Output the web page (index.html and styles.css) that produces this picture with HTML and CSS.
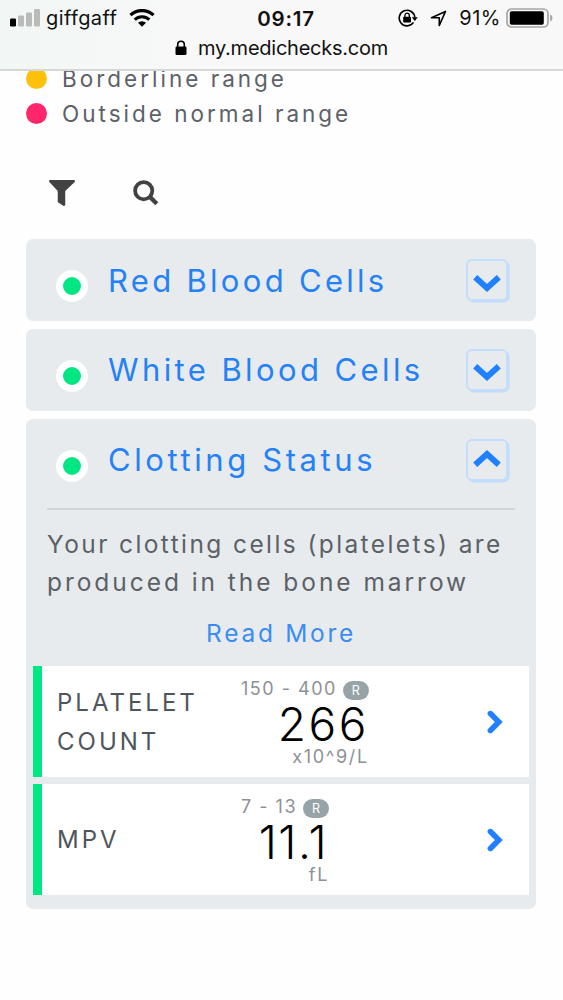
FILE: index.html
```html
<!DOCTYPE html>
<html lang="en">
<head>
  <meta charset="UTF-8">
  <meta name="viewport" content="width=device-width, initial-scale=1.0">
  <title>Medichecks</title>
  <link rel="stylesheet" href="styles.css">
</head>
<body>
  <header class="browser">
    <div class="status">
      <div class="status-left">
        <svg class="signal" width="30" height="18" viewBox="0 0 30 18">
          <rect x="0" y="9.5" width="6" height="8" rx="1.3" fill="#000"/>
          <rect x="8" y="6.5" width="6" height="11" rx="1.3" fill="#b9bbba"/>
          <rect x="16" y="3.5" width="6" height="14" rx="1.3" fill="#b9bbba"/>
          <rect x="24" y="0" width="6" height="17.5" rx="1.3" fill="#b9bbba"/>
        </svg>
        <span class="carrier">giffgaff</span>
        <svg class="wifi" width="26" height="18" viewBox="0 0 26 18">
          <path d="M1.5 6.2A16.5 16.5 0 0 1 24.5 6.2" fill="none" stroke="#000" stroke-width="3.2"/>
          <path d="M5.7 10.6A10.5 10.5 0 0 1 20.3 10.6" fill="none" stroke="#000" stroke-width="3"/>
          <path d="M9 13.8a5.8 5.8 0 0 1 8 0L13 17.7z" fill="#000"/>
        </svg>
      </div>
      <span class="time">09:17</span>
      <div class="status-right">
        <svg class="rotation" width="20" height="18" viewBox="0 0 20 18">
          <path d="M15.5 13.4A7.8 7.8 0 1 1 16.8 8.5" fill="none" stroke="#000" stroke-width="1.6"/>
          <path d="M13.8 8.2h6l-3 3.7z" fill="#000"/>
          <rect x="5.2" y="7.8" width="7.8" height="5.8" rx=".8" fill="#000"/>
          <path d="M6.9 8.3V6.4a2.2 2.2 0 0 1 4.4 0v1.9" fill="none" stroke="#000" stroke-width="1.3"/>
        </svg>
        <svg class="location" width="17" height="17" viewBox="0 0 17 17">
          <path d="M1.5 7.7L15.5 1.4L9.3 15.5V7.7z" fill="none" stroke="#000" stroke-width="1.6" stroke-linejoin="round"/>
        </svg>
        <span class="percent">91%</span>
        <svg class="battery" width="47" height="20" viewBox="0 0 47 20">
          <rect x="1" y="1" width="41" height="18" rx="4.5" fill="none" stroke="#a5a5a5" stroke-width="1.7"/>
          <rect x="3.8" y="3.3" width="34" height="13.4" rx="1.8" fill="#000"/>
          <path d="M44.2 6.5c3 1.2 3 5.8 0 7z" fill="#a5a5a5"/>
        </svg>
      </div>
    </div>
    <div class="address">
      <svg width="12" height="16" viewBox="0 0 12 16">
        <rect x="0.5" y="6.6" width="11" height="8.4" rx="1.3" fill="#000"/>
        <path d="M2.7 7V4.5a3.3 3.3 0 0 1 6.6 0V7" fill="none" stroke="#000" stroke-width="1.6"/>
      </svg>
      <span class="domain">my.medichecks.com</span>
    </div>
  </header>

  <main class="page">
    <ul class="legend">
      <li><span class="dot borderline"></span>Borderline range</li>
      <li><span class="dot outside"></span>Outside normal range</li>
    </ul>

    <div class="tools">
      <svg width="26" height="26" viewBox="0 0 512 512">
        <path fill="#424242" d="M488 0H24C3 0-8 26 7 41l165 175v206c0 8 4 15 10 20l100 65c16 11 38 0 38-19V216L505 41c15-15 4-41-17-41z"/>
      </svg>
      <svg width="26" height="26" viewBox="0 0 26 26">
        <circle cx="10.7" cy="10.7" r="8.6" fill="none" stroke="#424242" stroke-width="3.8"/>
        <path d="M16.500 16.500l7.300 7.300" stroke="#424242" stroke-width="4.400"/>
      </svg>
    </div>

    <section class="card">
      <div class="card-head">
        <span class="state"></span>
        <h2>Red Blood Cells</h2>
        <button class="toggle"><svg width="28" height="18" viewBox="0 0 28 18"><path d="M2.2 2.2L14 13L25.8 2.2"/></svg></button>
      </div>
    </section>

    <section class="card">
      <div class="card-head">
        <span class="state"></span>
        <h2 class="white">White Blood Cells</h2>
        <button class="toggle"><svg width="28" height="18" viewBox="0 0 28 18"><path d="M2.2 2.2L14 13L25.8 2.2"/></svg></button>
      </div>
    </section>

    <section class="card">
      <div class="card-head">
        <span class="state"></span>
        <h2 class="clotting">Clotting Status</h2>
        <button class="toggle open"><svg width="28" height="18" viewBox="0 0 28 18"><path d="M2.2 15.8L14 5L25.8 15.8"/></svg></button>
      </div>
      <div class="about">
        <p>Your clotting cells (platelets) are<br><span class="second">produced in the bone marrow</span></p>
        <a class="more">Read More</a>
      </div>

      <div class="result">
        <h3>PLATELET<br>COUNT</h3>
        <div class="reading">
          <div class="range">150 - 400<span class="badge">R</span></div>
          <div class="value">266</div>
          <div class="unit">x10^9/L</div>
        </div>
        <svg class="arrow" width="16" height="24" viewBox="0 0 16 24"><path d="M3.4 3.6L11.8 12L3.4 20.4"/></svg>
      </div>

      <div class="result">
        <h3>MPV</h3>
        <div class="reading">
          <div class="range">7 - 13<span class="badge">R</span></div>
          <div class="value decimal">11.1</div>
          <div class="unit">fL</div>
        </div>
        <svg class="arrow" width="16" height="24" viewBox="0 0 16 24"><path d="M3.4 3.6L11.8 12L3.4 20.4"/></svg>
      </div>
    </section>
  </main>
</body>
</html>
```
FILE: styles.css
```css
* {
  box-sizing: border-box;
}

body {
  margin: 0;
  height: 1000px;
  overflow: hidden;
  background: #fefefe;
  font-family: Inter, "Open Sans", sans-serif;
  color: #5c6167;
}

h2, h3, p, ul {
  margin: 0;
  padding: 0;
  font-weight: 400;
}

svg {
  display: block;
  flex: none;
}

span, h2, h3 {
  white-space: nowrap;
}

.browser {
  height: 71px;
  border-bottom: 2px solid #d6d7d7;
  background: linear-gradient(90deg, #f1f7f4, #f8f8f8 35%);
  color: #111;
}

.status {
  display: grid;
  grid-template-columns: 1fr auto 1fr;
  align-items: center;
  height: 36px;
  padding: 0 10px;
}

.status-left, .status-right {
  display: flex;
  align-items: center;
}

.status-right {
  justify-content: flex-end;
}

.carrier {
  margin-left: 6px;
  font-size: 20px;
  letter-spacing: 0.4px;
}

.wifi {
  margin-left: 12px;
}

.time {
  padding-left: 9px;
  font-size: 20.5px;
  font-weight: 600;
  letter-spacing: 0.8px;
}

.location {
  margin-left: 12px;
}

.percent {
  margin: 0 5px 0 12px;
  font-size: 20px;
  letter-spacing: 0.5px;
}

.address {
  display: flex;
  justify-content: center;
  align-items: center;
  gap: 11px;
  height: 24px;
  font-size: 20px;
  letter-spacing: -0.25px;
}

.page {
  height: 929px;
  padding: 0 27px 0 26px;
  overflow: hidden;
}

.legend {
  margin-top: -10px;
  list-style: none;
  font-size: 22.5px;
  letter-spacing: 3px;
}

.legend li {
  display: flex;
  align-items: center;
  height: 35px;
}

.dot {
  width: 21px;
  height: 21px;
  margin-right: 15px;
  border-radius: 50%;
}

.borderline {
  background: #fec10b;
}

.outside {
  background: #ff266b;
}

.tools {
  display: flex;
  gap: 58px;
  margin: 49px 0 33px 23px;
}

.card {
  margin-bottom: 7.5px;
  padding: 0 7px;
  border-radius: 7px;
  background: #e7ebee;
}

.card-head {
  display: flex;
  align-items: center;
  height: 82.3px;
  padding: 0 21px 0 23px;
}

.state {
  width: 32px;
  height: 32px;
  margin-top: 12px;
  border: 7px solid #fff;
  border-radius: 50%;
  background: #00e683;
}

.card h2 {
  margin-left: 20px;
  color: #2581f6;
  font-size: 31px;
  letter-spacing: 3.3px;
}

.card h2.white {
  letter-spacing: 3.4px;
}

.card h2.clotting {
  letter-spacing: 3.6px;
}

.toggle {
  display: flex;
  justify-content: center;
  align-items: center;
  width: 42px;
  height: 42px;
  margin-left: auto;
  padding: 7px 0 0;
  border: 2px solid #c3defb;
  border-radius: 6px;
  background: none;
  box-shadow: 1.5px 1.5px 0 #c0dcfa;
}

.toggle.open {
  padding: 0 0 4px;
}

.toggle path, .arrow path {
  fill: none;
  stroke: #2080ff;
  stroke-width: 6;
}

.about {
  height: 158.5px;
  margin: 7px 14px 0;
  padding-top: 15px;
  border-top: 2px solid #d0d5d8;
  font-size: 24.5px;
  line-height: 38.5px;
  letter-spacing: 2.4px;
}

.second {
  letter-spacing: 2.95px;
}

.more {
  display: block;
  margin-top: 12px;
  color: #3c8df2;
  letter-spacing: 2.7px;
  text-align: center;
}

.card:last-child {
  height: 490.5px;
}

.result {
  display: flex;
  align-items: center;
  height: 110.5px;
  margin-bottom: 7.5px;
  border-left: 9px solid #00e683;
  background: #fff;
}

.result h3 {
  width: 184px;
  padding: 2px 0 0 15px;
  color: #50555b;
  font-size: 24px;
  line-height: 38.5px;
  letter-spacing: 3px;
}

.reading {
  display: flex;
  flex-direction: column;
  align-items: flex-end;
  margin-left: 15px;
}

.range {
  display: flex;
  align-items: center;
  height: 22px;
  color: #8c9196;
  font-size: 18px;
  line-height: 22px;
  letter-spacing: 1.5px;
}

.badge {
  width: 26px;
  height: 19px;
  margin: 4px 0 0 6px;
  border-radius: 10px;
  background: #96a4a8;
  color: #fff;
  font-size: 12.5px;
  line-height: 19px;
  letter-spacing: 0;
  text-align: center;
}

.value {
  height: 48px;
  color: #000;
  font-size: 46px;
  font-weight: 300;
  line-height: 48px;
  letter-spacing: 2.5px;
}

.decimal {
  margin-right: 1px;
  letter-spacing: 1.5px;
}

.unit {
  height: 18px;
  color: #8c9196;
  font-size: 18px;
  line-height: 18px;
  letter-spacing: 1.7px;
}

.arrow {
  margin: 0 26px 0 auto;
}

.arrow path {
  stroke-width: 5.6;
  stroke-linecap: round;
}
```
